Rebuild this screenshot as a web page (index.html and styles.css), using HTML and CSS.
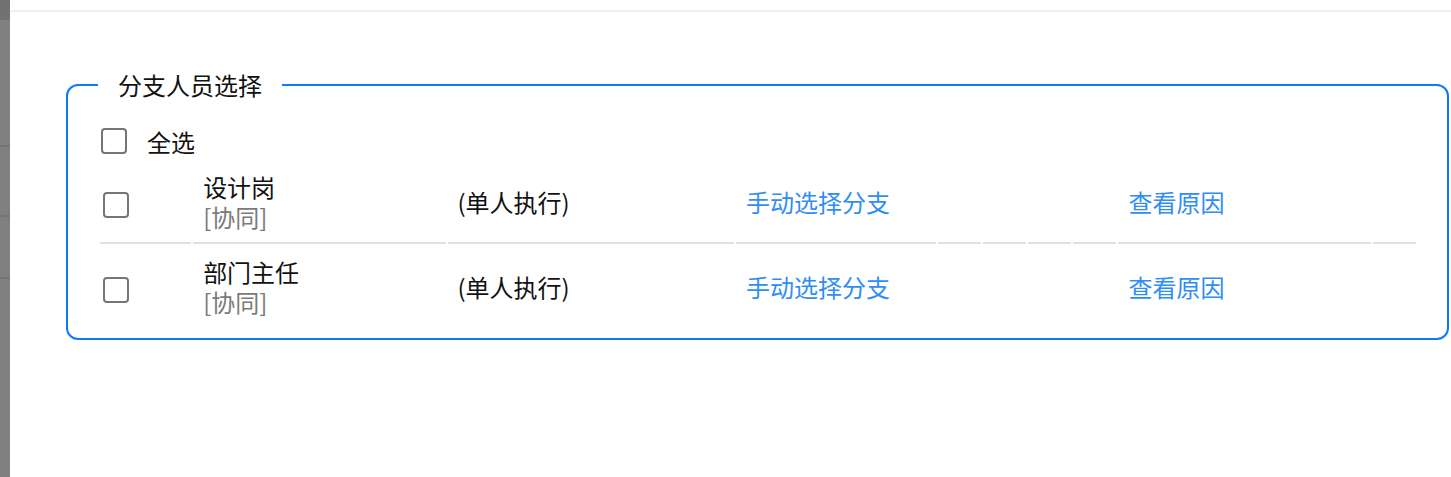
FILE: index.html
```html
<!DOCTYPE html>
<html lang="zh-CN">
<head>
  <meta charset="UTF-8" />
  <meta name="viewport" content="width=device-width, initial-scale=1.0" />
  <title>分支人员选择</title>
  <link rel="stylesheet" href="styles.css">
</head>
<body>
  <div class="page">
    <div class="side-mask">
      <div class="side-top"></div>
      <div class="side-line line-1"></div>
      <div class="side-line line-2"></div>
      <div class="side-line line-3"></div>
    </div>

    <div class="main">
      <div class="top-bar"></div>

      <fieldset class="branch-box">
        <legend>分支人员选择</legend>

        <label class="select-all">
          <input type="checkbox" class="chk" />
          <span>全选</span>
        </label>

        <table class="branch-table">
          <tbody>
            <tr>
              <td class="c-check"><input type="checkbox" class="chk" /></td>
              <td class="c-name"><span class="name">设计岗</span><span class="role">[协同]</span></td>
              <td class="c-mode">(单人执行)</td>
              <td class="c-link"><a href="#">手动选择分支</a></td>
              <td class="c-empty"></td>
              <td class="c-empty"></td>
              <td class="c-empty"></td>
              <td class="c-empty"></td>
              <td class="c-reason"><a href="#">查看原因</a></td>
              <td class="c-empty"></td>
            </tr>
            <tr class="row-last">
              <td class="c-check"><input type="checkbox" class="chk" /></td>
              <td class="c-name"><span class="name">部门主任</span><span class="role">[协同]</span></td>
              <td class="c-mode">(单人执行)</td>
              <td class="c-link"><a href="#">手动选择分支</a></td>
              <td class="c-empty"></td>
              <td class="c-empty"></td>
              <td class="c-empty"></td>
              <td class="c-empty"></td>
              <td class="c-reason"><a href="#">查看原因</a></td>
              <td class="c-empty"></td>
            </tr>
          </tbody>
        </table>
      </fieldset>
    </div>
  </div>
</body>
</html>
```

FILE: styles.css
```css
:root {
  --blue-border: #0b7bf8;
  --link: #2f8df6;
  --text: #111;
  --muted: #7a7a7a;
  --row-line: #e0e0e0;
  --mask: #808080;
}

html, body {
  margin: 0;
  padding: 0;
  height: 100%;
  background: #fff;
}

body {
  font-family: "Microsoft YaHei", "Noto Sans CJK SC", "Noto Sans", sans-serif;
  color: var(--text);
  overflow: hidden;
}

.page {
  display: flex;
  height: 100%;
}

/* dimmed sidebar strip on the left */
.side-mask {
  position: relative;
  width: 10px;
  flex-shrink: 0;
  background: var(--mask);
}

.side-top {
  height: 20px;
  background: #727272;
}

.side-line {
  position: absolute;
  left: 0;
  right: 0;
  height: 2px;
  background: #747474;
}

.line-1 { top: 145px; }
.line-2 { top: 215px; }
.line-3 { top: 277px; }

.main {
  flex: 1;
  min-width: 0;
}

.top-bar {
  height: 10px;
  border-bottom: 2px solid #efefef;
}

.branch-box {
  margin: 58px 2px 0 56px;
  padding: 24px 29px 8px 30px;
  border: 2px solid var(--blue-border);
  border-radius: 12px;
  min-width: 0;
}

.branch-box legend {
  padding: 0 20px;
  font-size: 24px;
  line-height: 30px;
  color: var(--text);
}

.chk {
  appearance: none;
  -webkit-appearance: none;
  width: 26px;
  height: 26px;
  margin: 0;
  border: 2px solid #767676;
  border-radius: 4px;
  background: #fff;
  box-sizing: border-box;
  vertical-align: middle;
}

.select-all {
  display: flex;
  align-items: center;
  gap: 20px;
  height: 34px;
  margin-bottom: 2px;
  padding-left: 3px;
  font-size: 24px;
}

.branch-table {
  width: 1320px;
  table-layout: fixed;
  border-collapse: separate;
  border-spacing: 2px;
  font-size: 24px;
  line-height: 30px;
}

.branch-table td {
  box-sizing: border-box;
  padding: 10px 10px;
  vertical-align: middle;
  white-space: nowrap;
}

.branch-table tr:first-child td {
  border-bottom: 2px solid var(--row-line);
}

.branch-table .row-last td {
  padding-top: 11px;
  padding-bottom: 11px;
}

.branch-table .row-last .c-check,
.branch-table .c-check {
  width: 91px;
  padding: 0 0 0 3px;
}

.c-name { width: 252px; }
.c-mode { width: 286px; }
.c-link { width: 200px; }
.c-empty { width: 43px; }
.c-reason { width: 252px; }

.name,
.role {
  display: block;
}

.role {
  color: var(--muted);
}

.branch-table a {
  color: var(--link);
  text-decoration: none;
}
```
